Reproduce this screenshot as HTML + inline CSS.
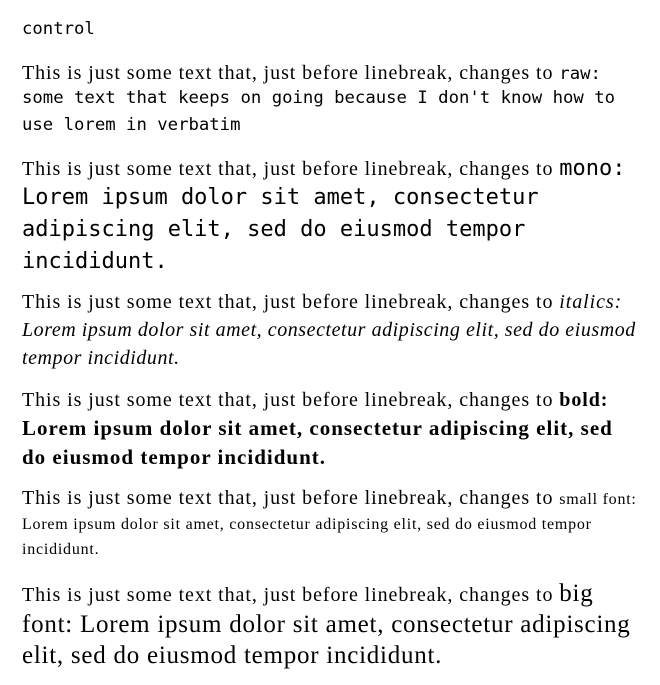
<!DOCTYPE html>
<html><head><meta charset="utf-8"><style>
body{margin:0;background:#fff;width:660px;height:685px;position:relative;overflow:hidden;color:#000}
.l{position:absolute;left:22px;white-space:nowrap;font-family:"Liberation Serif",serif;font-size:20px;line-height:28px;letter-spacing:0.92px}
.m{font-family:"DejaVu Sans Mono",monospace;font-size:17.3px;letter-spacing:0}
.M{font-family:"DejaVu Sans Mono",monospace;font-size:22px;letter-spacing:0}
.i{letter-spacing:0.55px}
.bo{font-size:21px;letter-spacing:1px}
.s{font-size:16px;letter-spacing:0.77px}
.b{font-size:25px;letter-spacing:0.75px}
</style></head><body>
<div class="l m" style="top:15px">control</div>
<div class="l" style="top:59px">This is just some text that, just before linebreak, changes to <span class="m">raw:</span></div>
<div class="l m" style="top:84px">some text that keeps on going because I don't know how to</div>
<div class="l m" style="top:111px">use lorem in verbatim</div>
<div class="l" style="top:155px">This is just some text that, just before linebreak, changes to <span class="M">mono:</span></div>
<div class="l M" style="top:184px">Lorem ipsum dolor sit amet, consectetur</div>
<div class="l M" style="top:216px">adipiscing elit, sed do eiusmod tempor</div>
<div class="l M" style="top:248px">incididunt.</div>
<div class="l" style="top:288px">This is just some text that, just before linebreak, changes to <i>italics:</i></div>
<div class="l i" style="top:316px"><i>Lorem ipsum dolor sit amet, consectetur adipiscing elit, sed do eiusmod</i></div>
<div class="l i" style="top:344px"><i>tempor incididunt.</i></div>
<div class="l" style="top:386px">This is just some text that, just before linebreak, changes to <b>bold:</b></div>
<div class="l bo" style="top:414px"><b>Lorem ipsum dolor sit amet, consectetur adipiscing elit, sed</b></div>
<div class="l bo" style="top:443px"><b>do eiusmod tempor incididunt.</b></div>
<div class="l" style="top:484px">This is just some text that, just before linebreak, changes to <span class="s">small font:</span></div>
<div class="l s" style="top:511px">Lorem ipsum dolor sit amet, consectetur adipiscing elit, sed do eiusmod tempor</div>
<div class="l s" style="top:536px">incididunt.</div>
<div class="l" style="top:580px">This is just some text that, just before linebreak, changes to <span class="b">big</span></div>
<div class="l b" style="top:611px">font: Lorem ipsum dolor sit amet, consectetur adipiscing</div>
<div class="l b" style="top:642px">elit, sed do eiusmod tempor incididunt.</div>
</body></html>
